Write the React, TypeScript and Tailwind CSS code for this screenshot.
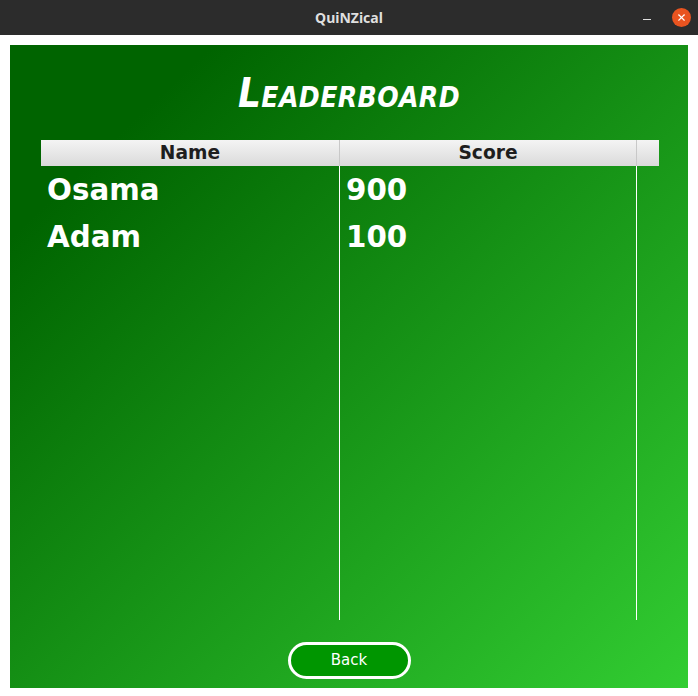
import { X } from "lucide-react";

const rows = [
  { name: "Osama", score: 900 },
  { name: "Adam", score: 100 },
];

export default function App() {
  return (
    <div className="flex h-[696px] w-[698px] flex-col bg-white">
      <TitleBar />
      <div className="px-[10px] pt-[10px] pb-[8px]">
        <div className="flex h-[643px] flex-col items-center bg-[linear-gradient(to_bottom_right,#006400_15%,#32cd32_100%)]">
          <h1 className="mt-[28px] h-[40px] font-['DejaVu_Sans_Condensed','DejaVu_Sans',sans-serif] text-[40px] leading-[40px] font-bold italic tracking-[0.4px] text-white [font-variant:small-caps]">
            Leaderboard
          </h1>
          <Table />
          <button className="mt-[22px] flex h-[37px] w-[123px] items-center justify-center rounded-full border-[3px] border-white bg-[#009600] font-['DejaVu_Sans',sans-serif] text-[15px] text-white">
            Back
          </button>
        </div>
      </div>
    </div>
  );
}

function TitleBar() {
  return (
    <div className="relative flex h-[35px] items-center justify-center bg-[#2c2c2c]">
      <span className="font-['Noto_Sans','DejaVu_Sans',sans-serif] text-[14px] font-bold text-[#dfdfdf]">
        QuiNZical
      </span>
      <div className="absolute top-0 right-[7px] flex h-[35px] items-center gap-[21px]">
        <span className="mt-[4px] h-[1.5px] w-[8px] bg-[#dfdfdf]" />
        <span className="flex size-[19px] items-center justify-center rounded-full bg-[#e95420]">
          <X className="size-[11px] text-white" strokeWidth={2.5} />
        </span>
      </div>
    </div>
  );
}

function Table() {
  return (
    <div className="mt-[27px] ml-[31px] flex w-[618px] flex-col self-start">
      <div className="flex h-[26px] bg-[linear-gradient(to_bottom,#f4f4f4,#dadada)] font-['DejaVu_Sans',sans-serif] text-[18.67px] font-bold text-[#1e1e1e]">
        <div className="flex w-[299px] items-center justify-center border-r border-[#c8c8c8] leading-none">
          Name
        </div>
        <div className="flex w-[297px] items-center justify-center border-r border-[#c8c8c8] leading-none">
          Score
        </div>
        <div className="flex-1" />
      </div>
      <div className="flex h-[454px]">
        <div className="flex w-[299px] flex-col border-r border-white">
          {rows.map((r) => (
            <Cell key={r.name} text={r.name} />
          ))}
        </div>
        <div className="flex w-[297px] flex-col border-r border-white">
          {rows.map((r) => (
            <Cell key={r.name} text={String(r.score)} />
          ))}
        </div>
        <div className="flex-1" />
      </div>
    </div>
  );
}

function Cell({ text }: { text: string }) {
  return (
    <div className="flex h-[47px] items-center pt-[3px] pl-[6px] font-['DejaVu_Sans',sans-serif] text-[29.33px] font-bold text-white">
      {text}
    </div>
  );
}
